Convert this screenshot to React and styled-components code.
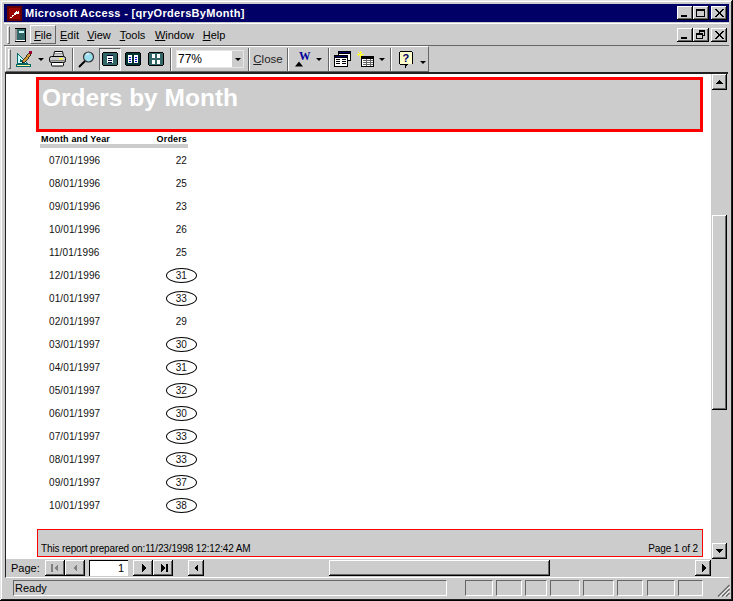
import React from "react";
import styled, { createGlobalStyle, css } from "styled-components";

const Global = createGlobalStyle`
  html, body { margin: 0; padding: 0; background: #cccccc; overflow: hidden; }
  * { box-sizing: border-box; }
`;

const GREY = "#cccccc";
const SHADOW = "#666666";
const NAVY = "#000066";

const raised = css`
  background: ${GREY};
  box-shadow: inset -1px -1px 0 #000, inset 1px 1px 0 #fff, inset -2px -2px 0 ${SHADOW};
`;

const Window = styled.div`
  width: 733px;
  height: 601px;
  padding: 4px;
  background: ${GREY};
  display: flex;
  flex-direction: column;
  font-family: "Liberation Sans", Arial, sans-serif;
  font-size: 11px;
  color: #000;
  box-shadow: inset -1px -1px 0 #000, inset 1px 1px 0 #e6e6e6, inset -2px -2px 0 #222, inset 2px 2px 0 #fff;
`;

const TitleBar = styled.div`
  height: 18px;
  background: ${NAVY};
  color: #fff;
  display: flex;
  align-items: center;
  padding: 0 2px 0 3px;
  flex: none;
`;
const TitleText = styled.div`
  font-weight: 700;
  font-size: 11px;
  margin-left: 3px;
  flex: 1;
  letter-spacing: 0.32px;
  white-space: nowrap;
`;
const WinBtn = styled.div`
  ${raised}
  width: 16px;
  height: 14px;
  display: flex;
  align-items: center;
  justify-content: center;
  margin-left: ${(p) => p.$gap || 0}px;
  flex: none;
`;

const MenuBar = styled.div`
  height: 23px;
  margin-top: 1px;
  display: flex;
  align-items: center;
  padding: 0 2px 0 3px;
  border-bottom: 1px solid ${SHADOW};
  border-top: 1px solid #fff;
  flex: none;
`;
const Handle = styled.div`
  width: 3px;
  height: ${(p) => p.$h}px;
  border-left: 1px solid #fff;
  border-top: 1px solid #fff;
  border-right: 1px solid ${SHADOW};
  border-bottom: 1px solid ${SHADOW};
  flex: none;
`;
const MenuIcon = styled.div`
  width: 20px;
  display: flex;
  justify-content: center;
  flex: none;
`;
const MenuItem = styled.div`
  height: 19px;
  width: ${(p) => p.$w}px;
  display: flex;
  align-items: center;
  justify-content: center;
  flex: none;
  ${(p) =>
    p.$active &&
    css`
      border-top: 1px solid #fff;
      border-left: 1px solid #fff;
      border-right: 1px solid ${SHADOW};
      border-bottom: 1px solid ${SHADOW};
    `}
`;
const MenuSpacer = styled.div`
  flex: 1;
`;
const Key = styled.span`
  text-decoration: underline;
  text-underline-offset: 1px;
`;

const ToolRow = styled.div`
  height: 26px;
  display: flex;
  flex: none;
`;
const Toolbar = styled.div`
  width: 424px;
  height: 26px;
  margin-left: 1px;
  display: flex;
  align-items: center;
  padding-left: 2px;
  border-top: 1px solid #fff;
  border-left: 1px solid #fff;
  border-right: 1px solid ${SHADOW};
  border-bottom: 1px solid ${SHADOW};
`;
const Tool = styled.div`
  width: ${(p) => p.$w}px;
  height: 23px;
  margin-left: ${(p) => p.$gap || 0}px;
  display: flex;
  align-items: center;
  justify-content: center;
  flex: none;
  ${(p) =>
    p.$pressed &&
    css`
      background: #e6e6e6;
      border-top: 1px solid ${SHADOW};
      border-left: 1px solid ${SHADOW};
      border-right: 1px solid #fff;
      border-bottom: 1px solid #fff;
    `}
`;
const Arrow = styled.div`
  width: 0;
  height: 0;
  border-left: 3px solid transparent;
  border-right: 3px solid transparent;
  border-top: 3px solid #000;
  margin-top: ${(p) => p.$down || 0}px;
`;
const Sep = styled.div`
  width: 2px;
  height: 23px;
  margin-left: ${(p) => p.$l}px;
  margin-right: ${(p) => p.$r}px;
  border-left: 1px solid ${SHADOW};
  border-right: 1px solid #fff;
  flex: none;
`;
const Combo = styled.div`
  width: 68px;
  height: 18px;
  margin: 0 4px 0 1px;
  background: #fff;
  display: flex;
  align-items: center;
  justify-content: space-between;
  padding-left: 1px;
  font-size: 12px;
  border: 1px solid #e6e6e6;
  flex: none;
`;
const ComboBtn = styled.div`
  width: 11px;
  height: 16px;
  background: ${GREY};
  display: flex;
  align-items: center;
  justify-content: center;
`;
const CloseLabel = styled.div`
  width: 32px;
  text-align: center;
  font-size: 11.5px;
  flex: none;
  color: #222;
`;

const Workspace = styled.div`
  flex: 1;
  min-height: 0;
  display: flex;
  margin: 0 1px 0 1px;
  border-top: 2px solid #222;
  border-left: 1px solid #222;
`;
const Page = styled.div`
  flex: 1;
  background: #fff;
  padding: 3px 8px 0 31px;
  display: flex;
  flex-direction: column;
  color: #111;
`;
const ReportHeader = styled.div`
  height: 55px;
  margin-left: -1px;
  background: ${GREY};
  border: 3px solid #f00;
  padding: 3px 0 0 3px;
  color: #fff;
  font-weight: 700;
  font-size: 24.5px;
  line-height: 30px;
  flex: none;
`;
const Table = styled.div`
  width: 148px;
  margin-left: 3px;
  flex: none;
`;
const HeadRow = styled.div`
  height: 16px;
  padding: 3px 1px 0 1px;
  display: flex;
  justify-content: space-between;
  font-weight: 700;
  font-size: 9px;
  line-height: 9px;
  letter-spacing: 0.15px;
  border-bottom: 4px solid ${GREY};
  color: #000;
`;
const Row = styled.div`
  height: 23px;
  display: flex;
  align-items: center;
  justify-content: space-between;
  padding: 1px 1px 0 9px;
  font-size: 10px;
  letter-spacing: 0.12px;
`;
const Value = styled.span`
  position: relative;
  ${(p) =>
    p.$oval &&
    css`
      &::before {
        content: "";
        position: absolute;
        top: -2px;
        bottom: -2px;
        left: -10px;
        right: -10px;
        border: 1px solid #000;
        border-radius: 50%;
      }
    `}
`;
const Footer = styled.div`
  height: 28px;
  margin-top: 13px;
  background: ${GREY};
  border: 1px solid #f00;
  display: flex;
  align-items: flex-end;
  justify-content: space-between;
  padding: 0 4px 1px 3px;
  font-size: 10px;
  line-height: 12px;
  letter-spacing: -0.13px;
  color: #000;
  flex: none;
`;
const VScroll = styled.div`
  width: 17px;
  background: ${GREY};
  display: flex;
  flex-direction: column;
  flex: none;
  padding-left: 1px;
`;
const ScrollBtn = styled.div`
  ${raised}
  width: 15px;
  height: 16px;
  display: flex;
  align-items: center;
  justify-content: center;
  flex: none;
`;
const VTrack = styled.div`
  flex: 1;
  display: flex;
  flex-direction: column;
  padding: 125px 0 133px;
`;
const VThumb = styled.div`
  ${raised}
  flex: 1;
  width: 15px;
`;

const NavBar = styled.div`
  height: 19px;
  display: flex;
  align-items: flex-start;
  padding: 1px 18px 0 5px;
  margin-left: 1px;
  border-left: 1px solid #222;
  border-bottom: 1px solid #fff;
  flex: none;
`;
const PageLabel = styled.div`
  width: 34px;
  font-size: 11px;
  line-height: 17px;
  flex: none;
`;
const NavBtn = styled.div`
  ${raised}
  width: ${(p) => p.$w || 20}px;
  height: 16px;
  margin-left: ${(p) => p.$gap || 0}px;
  display: flex;
  align-items: center;
  justify-content: center;
  flex: none;
`;
const PageInput = styled.div`
  width: 39px;
  height: 16px;
  margin-left: 4px;
  background: #fff;
  border-top: 1px solid #000;
  border-left: 1px solid #000;
  text-align: right;
  padding-right: 4px;
  font-size: 11px;
  line-height: 15px;
  flex: none;
`;
const HTrack = styled.div`
  flex: 1;
  height: 16px;
  background: ${GREY};
  display: flex;
  padding-left: 125px;
  padding-right: 145px;
`;
const HThumb = styled.div`
  ${raised}
  flex: 1;
`;

const StatusBar = styled.div`
  height: 19px;
  display: flex;
  align-items: stretch;
  padding: 2px 0 1px 9px;
  flex: none;
  position: relative;
`;
const Panel = styled.div`
  width: ${(p) => p.$w}px;
  margin-left: ${(p) => p.$gap || 0}px;
  border-top: 1px solid ${SHADOW};
  border-left: 1px solid ${SHADOW};
  border-right: 1px solid #fff;
  border-bottom: 1px solid #fff;
  padding-left: 1px;
  line-height: 15px;
  font-size: 11px;
  flex: none;
`;
const Grip = styled.div`
  position: absolute;
  right: -1px;
  bottom: 0;
  width: 13px;
  height: 13px;
  display: flex;
`;

const Px = ({ w = 16, h = 16, children }) => (
  <svg width={w} height={h} viewBox={`0 0 ${w} ${h}`} shapeRendering="crispEdges" style={{ display: "block" }}>
    {children}
  </svg>
);

const KeyIcon = () => (
  <Px w={15} h={15}>
    <rect width="15" height="15" fill="#fff" />
    <rect x="1" y="1" width="13" height="13" fill="none" stroke="#660000" strokeWidth="2" />
    <rect x="2" y="2" width="11" height="11" fill="#990000" />
    <path d="M3 11h2v-2h2v-2h1v-1h1v-1h3v3h-3v1h-2v1h-1v1h-1v1h-2z" fill="#fff" />
    <rect x="10" y="5" width="1" height="1" fill="#990000" />
  </Px>
);

const MinGlyph = () => (
  <Px w={8} h={8}>
    <rect x="0" y="6" width="6" height="2" fill="#000" />
  </Px>
);
const MaxGlyph = () => (
  <Px w={10} h={10}>
    <rect x="0.5" y="1.5" width="8" height="7" fill="none" stroke="#000" />
    <rect x="0" y="1" width="9" height="2" fill="#000" />
  </Px>
);
const RestoreGlyph = () => (
  <Px w={10} h={10}>
    <path d="M3 0h6v6h-2v-1h1v-3h-4v1h-1z" fill="#000" />
    <rect x="0" y="3" width="7" height="2" fill="#000" />
    <rect x="0.5" y="4.5" width="6" height="4" fill="none" stroke="#000" />
  </Px>
);
const CloseGlyph = () => (
  <Px w={9} h={8}>
    <path d="M0 0h2l2.500 3 2.500-3h2l-3.500 4 3.500 4h-2l-2.500-3-2.500 3h-2l3.500-4z" fill="#000" />
  </Px>
);

const BookIcon = () => (
  <Px w={12} h={14}>
    <rect x="1" y="0" width="11" height="14" fill="#000" />
    <rect x="3" y="1" width="8" height="11" fill="#336666" />
    <rect x="1" y="1" width="2" height="12" fill="#999999" />
    <rect x="5" y="3" width="5" height="2" fill="#ccffff" />
    <rect x="2" y="12" width="9" height="1" fill="#ffffff" />
  </Px>
);
const DesignIcon = () => (
  <Px w={18} h={18}>
    <path d="M2.500 3.500v10h10z" fill="#ccffff" stroke="#006666" />
    <path d="M5 9v2.500h2.500z" fill="#ccc" stroke="#006666" />
    <rect x="1.500" y="14.500" width="14" height="2" fill="#ffff99" stroke="#006666" />
    <path d="M8 10l6-7 2 2-6 7-3 1z" fill="#cc9933" stroke="#000" strokeWidth="0.7" />
    <rect x="14" y="1" width="3" height="3" fill="#990033" />
  </Px>
);
const PrinterIcon = () => (
  <svg width="17" height="16" viewBox="0 0 17 16" style={{ display: "block" }}>
    <path d="M4.500 5.500l1-5h8l1 5z" fill="#fff" stroke="#000" />
    <path d="M6 2.500h7M6 4h7" stroke="#999" />
    <rect x="0.500" y="5.500" width="16" height="6" rx="2" fill="#ccc" stroke="#000" />
    <rect x="10" y="7" width="4" height="1.500" fill="#ffff33" />
    <path d="M1 9.800h15" stroke="#666" />
    <rect x="2.500" y="11.500" width="12" height="3.500" rx="1" fill="#fff" stroke="#000" />
  </svg>
);
const Magnifier = () => (
  <svg width="17" height="17" viewBox="0 0 17 17" style={{ display: "block" }}>
    <circle cx="10.500" cy="6" r="5" fill="#99ddee" stroke="#333" strokeWidth="1.200" />
    <path d="M7 10l-6 6" stroke="#000" strokeWidth="2" />
    <path d="M8 4a3 3 0 0 1 3-1" fill="none" stroke="#fff" />
  </svg>
);
const OnePage = () => (
  <Px w={16} h={14}>
    <rect x="0.500" y="0.500" width="15" height="13" rx="2" fill="#336666" stroke="#000" />
    <rect x="5" y="3" width="6" height="8" fill="#fff" />
    <path d="M5 3.500h6M6 6h4M6 8h4M6 10h4" stroke="#000033" />
  </Px>
);
const TwoPage = () => (
  <Px w={16} h={14}>
    <rect x="0.500" y="0.500" width="15" height="13" rx="2" fill="#003333" stroke="#000" />
    <rect x="3" y="3" width="4" height="8" fill="#fff" />
    <rect x="9" y="3" width="4" height="8" fill="#fff" />
    <path d="M4 5h2M4 7h2M4 9h2M10 5h2M10 7h2M10 9h2" stroke="#0000cc" />
  </Px>
);
const MultiPage = () => (
  <Px w={16} h={14}>
    <rect x="0.500" y="0.500" width="15" height="13" rx="2" fill="#336666" stroke="#000" />
    <rect x="4" y="2" width="3" height="4" fill="#fff" />
    <rect x="9" y="2" width="3" height="4" fill="#fff" />
    <rect x="4" y="8" width="3" height="4" fill="#fff" />
    <rect x="9" y="8" width="3" height="4" fill="#fff" />
  </Px>
);
const WordIcon = () => (
  <svg width="16" height="16" viewBox="0 0 16 16" style={{ display: "block" }}>
    <text x="4" y="9" fontFamily="Liberation Serif" fontWeight="700" fontSize="11.500" fill="#000099">W</text>
    <path d="M0 15.500l4-5 4 5z" fill="#000" />
  </svg>
);
const DbIcon = () => (
  <Px w={17} h={16}>
    <rect x="4.500" y="0.500" width="12" height="9" fill="#fff" stroke="#000" />
    <rect x="4.500" y="0.500" width="12" height="2" fill="#000066" stroke="#000" />
    <rect x="0.500" y="4.500" width="13" height="11" fill="#fff" stroke="#000" />
    <rect x="0.500" y="4.500" width="13" height="2" fill="#000066" stroke="#000" />
    <path d="M2 8h4M2 10h4M2 12h4M8 8h4M8 10h4M8 12h4" stroke="#000" />
  </Px>
);
const NewObject = () => (
  <Px w={17} h={16}>
    <path d="M3 0v7M0 3h7M1 1l4 4M5 1l-4 4" stroke="#ffff33" />
    <rect x="4.500" y="5.500" width="12" height="10" fill="#fff" stroke="#000" />
    <rect x="4.500" y="5.500" width="12" height="2" fill="#000" />
    <path d="M6 9h10M6 11h10M6 13h10M9 8v7M13 8v7" stroke="#666666" />
  </Px>
);
const HelpIcon = () => (
  <Px w={15} h={17}>
    <path d="M1 0h12v1h1v12h-5v1h-1v1h-1v2h-1v-3h-5v-1h-1v-12h1z" fill="#000" />
    <rect x="1" y="1" width="12" height="12" fill="#ffffcc" />
    <text x="3.500" y="11" fontFamily="Liberation Sans" fontWeight="700" fontSize="11" fill="#000066">?</text>
  </Px>
);

const Tri = ({ dir, color = "#000", bar }) => {
  const shapes = {
    up: "M0 6l3.500-4 3.500 4z",
    down: "M0 2l3.500 4 3.500-4z",
    left: "M5 0v8l-4-4z",
    right: "M2 0v8l4-4z",
  };
  return (
    <Px w={9} h={8}>
      {bar === "left" && <rect x="0" y="0" width="2" height="8" fill={color} />}
      {bar === "right" && <rect x="7" y="0" width="2" height="8" fill={color} />}
      <path d={shapes[dir]} transform={bar === "left" ? "translate(2 0)" : bar === "right" ? "translate(0 0)" : "translate(1 0)"} fill={color} />
    </Px>
  );
};

const GripIcon = () => (
  <Px w={13} h={13}>
    <path d="M12.500 1L1 12.500M12.500 5L5 12.500M12.500 9L9 12.500" stroke="#666666" strokeWidth="1.300" shapeRendering="auto" />
    <path d="M12.500 3L3 12.500M12.500 7L7 12.500M12.500 11L11 12.500" stroke="#fff" shapeRendering="auto" />
  </Px>
);

const rows = [
  ["07/01/1996", 22],
  ["08/01/1996", 25],
  ["09/01/1996", 23],
  ["10/01/1996", 26],
  ["11/01/1996", 25],
  ["12/01/1996", 31, true],
  ["01/01/1997", 33, true],
  ["02/01/1997", 29],
  ["03/01/1997", 30, true],
  ["04/01/1997", 31, true],
  ["05/01/1997", 32, true],
  ["06/01/1997", 30, true],
  ["07/01/1997", 33, true],
  ["08/01/1997", 33, true],
  ["09/01/1997", 37, true],
  ["10/01/1997", 38, true],
];

const panels = [
  [28, 18],
  [26, 3],
  [22, 3],
  [30, 3],
  [31, 3],
  [26, 3],
  [28, 4],
  [25, 3],
];

export default function App() {
  return (
    <Window>
      <Global />
      <TitleBar>
        <KeyIcon />
        <TitleText>Microsoft Access - [qryOrdersByMonth]</TitleText>
        <WinBtn><MinGlyph /></WinBtn>
        <WinBtn><MaxGlyph /></WinBtn>
        <WinBtn $gap={2}><CloseGlyph /></WinBtn>
      </TitleBar>
      <MenuBar>
        <Handle $h={18} />
        <MenuIcon><BookIcon /></MenuIcon>
        <MenuItem $w={26} $active><span><Key>F</Key>ile</span></MenuItem>
        <MenuItem $w={27}><span><Key>E</Key>dit</span></MenuItem>
        <MenuItem $w={32}><span><Key>V</Key>iew</span></MenuItem>
        <MenuItem $w={35}><span><Key>T</Key>ools</span></MenuItem>
        <MenuItem $w={49}><span><Key>W</Key>indow</span></MenuItem>
        <MenuItem $w={30}><span><Key>H</Key>elp</span></MenuItem>
        <MenuSpacer />
        <WinBtn><MinGlyph /></WinBtn>
        <WinBtn><RestoreGlyph /></WinBtn>
        <WinBtn $gap={2}><CloseGlyph /></WinBtn>
      </MenuBar>
      <ToolRow>
        <Toolbar>
          <Handle $h={20} />
          <Tool $w={26}><DesignIcon /></Tool>
          <Tool $w={8}><Arrow /></Tool>
          <Tool $w={25}><PrinterIcon /></Tool>
          <Sep $l={2} $r={2} />
          <Tool $w={21}><Magnifier /></Tool>
          <Tool $w={22} $gap={2} $pressed><OnePage /></Tool>
          <Tool $w={24}><TwoPage /></Tool>
          <Tool $w={22}><MultiPage /></Tool>
          <Sep $l={3} $r={3} />
          <Combo>
            77%
            <ComboBtn><Arrow /></ComboBtn>
          </Combo>
          <Sep $l={0} $r={2} />
          <CloseLabel><Key>C</Key>lose</CloseLabel>
          <Sep $l={3} $r={3} />
          <Tool $w={22}><WordIcon /></Tool>
          <Tool $w={10}><Arrow /></Tool>
          <Sep $l={4} $r={2} />
          <Tool $w={20}><DbIcon /></Tool>
          <Tool $w={26}><NewObject /></Tool>
          <Tool $w={7}><Arrow /></Tool>
          <Sep $l={5} $r={2} />
          <Tool $w={24}><HelpIcon /></Tool>
          <Tool $w={9}><Arrow $down={6} /></Tool>
        </Toolbar>
      </ToolRow>
      <Workspace>
        <Page>
          <ReportHeader>Orders by Month</ReportHeader>
          <Table>
            <HeadRow>
              <span>Month and Year</span>
              <span>Orders</span>
            </HeadRow>
            {rows.map(([d, n, oval]) => (
              <Row key={d}>
                <span>{d}</span>
                <Value $oval={oval}>{n}</Value>
              </Row>
            ))}
          </Table>
          <Footer>
            <span>This report prepared on:11/23/1998 12:12:42 AM</span>
            <span>Page 1 of 2</span>
          </Footer>
        </Page>
        <VScroll>
          <ScrollBtn><Tri dir="up" /></ScrollBtn>
          <VTrack><VThumb /></VTrack>
          <ScrollBtn><Tri dir="down" /></ScrollBtn>
        </VScroll>
      </Workspace>
      <NavBar>
        <PageLabel>Page:</PageLabel>
        <NavBtn><Tri dir="left" bar="left" color="#808080" /></NavBtn>
        <NavBtn><Tri dir="left" color="#808080" /></NavBtn>
        <PageInput>1</PageInput>
        <NavBtn $gap={5}><Tri dir="right" /></NavBtn>
        <NavBtn><Tri dir="right" bar="right" /></NavBtn>
        <NavBtn $w={16} $gap={15}><Tri dir="left" /></NavBtn>
        <HTrack><HThumb /></HTrack>
        <NavBtn $w={16}><Tri dir="right" /></NavBtn>
      </NavBar>
      <StatusBar>
        <Panel $w={434}>Ready</Panel>
        {panels.map(([w, gap], i) => (
          <Panel key={i} $w={w} $gap={gap} />
        ))}
        <Grip><GripIcon /></Grip>
      </StatusBar>
    </Window>
  );
}
